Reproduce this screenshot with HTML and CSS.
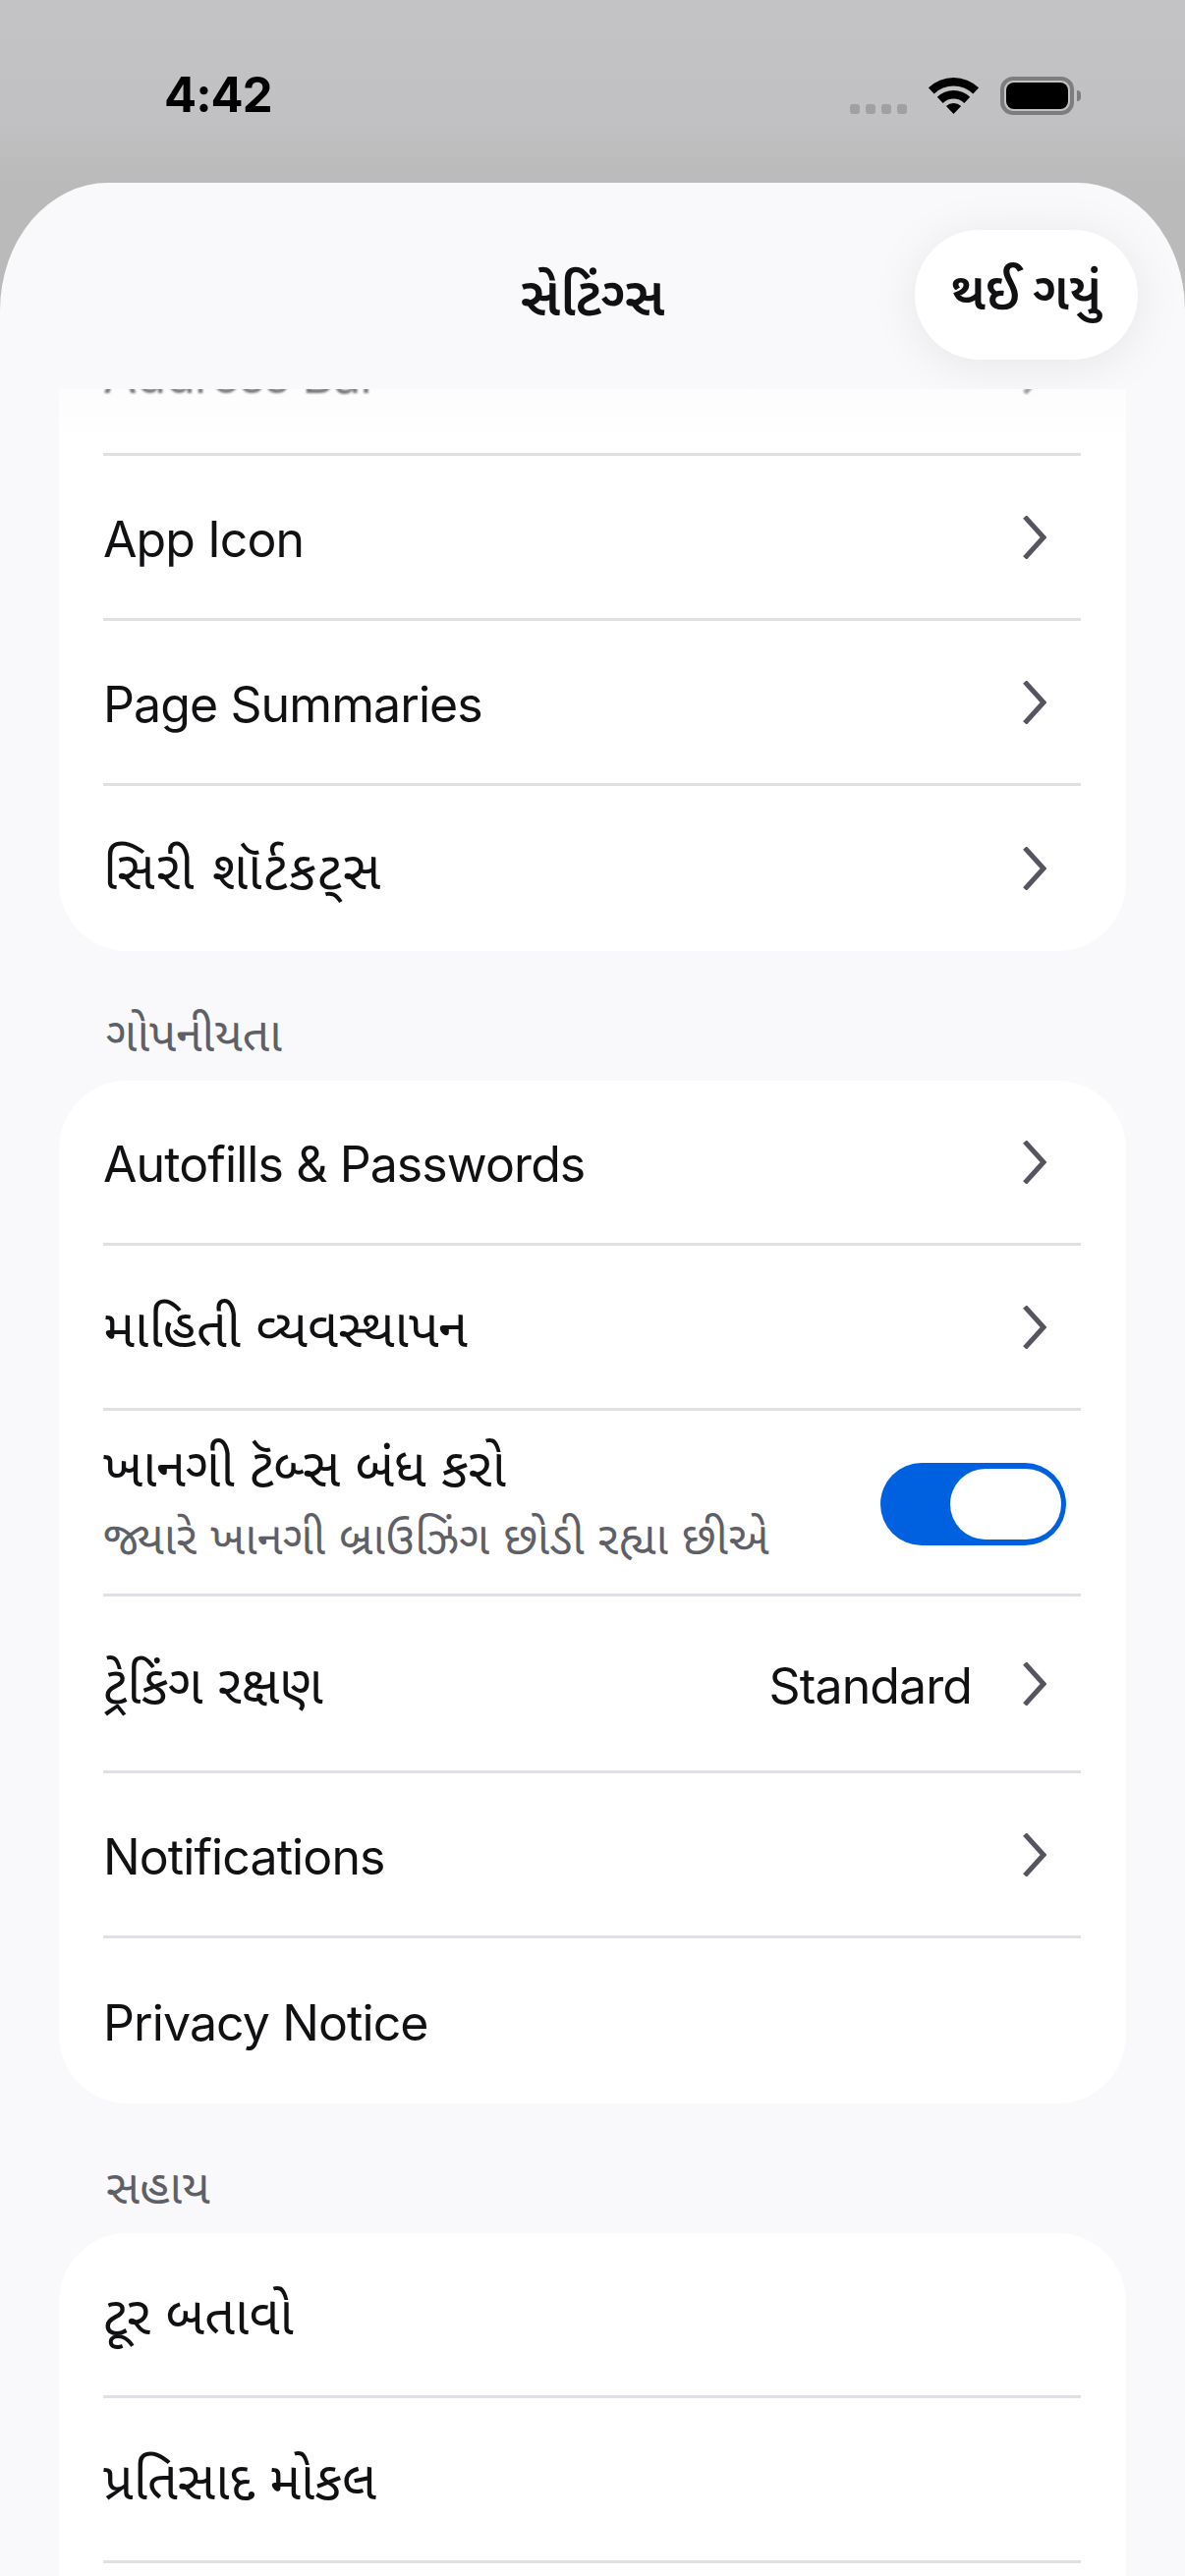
FILE: index.html
```html
<!DOCTYPE html>
<html lang="gu">
<head>
<meta charset="UTF-8">
<meta name="viewport" content="width=device-width, initial-scale=1.0">
<title>સેટિંગ્સ</title>
<link rel="stylesheet" href="styles.css">
</head>
<body>
    <div class="status-bar">
        <span class="time">4:42</span>
        <div class="status-icons">
            <div class="signal"><i></i><i></i><i></i><i></i></div>
            <svg class="wifi" width="51" height="37" viewBox="0 0 51 37">
                <path d="M-.2 10.4A37 37 0 0 1 51.2 10.4L45.3 16.5A28.5 28.5 0 0 0 5.7 16.5Z"/>
                <path d="M8.8 19.7A24 24 0 0 1 42.2 19.7L36.3 25.9A15.5 15.5 0 0 0 14.7 25.9Z"/>
                <path d="M17.9 29.1A11 11 0 0 1 33.1 29.1L25.5 37Z"/>
            </svg>
            <div class="battery"><div class="battery-fill"></div></div>
            <div class="battery-cap"></div>
        </div>
    </div>

    <div class="sheet">
        <header class="sheet-header">
            <h1>સેટિંગ્સ</h1>
            <button class="done">થઈ ગયું</button>
        </header>

        <div class="scroll-area">
            <div class="scroll-fade"></div>
            <div class="scroll-content">
                <section class="card">
                    <div class="row row-address">
                        <span class="label">Address Bar</span>
                        <svg class="chevron" width="24" height="44" viewBox="0 0 24 44"><path d="M2 1L21 22L2 43"/></svg>
                    </div>
                    <div class="row">
                        <span class="label">App Icon</span>
                        <svg class="chevron" width="24" height="44" viewBox="0 0 24 44"><path d="M2 1L21 22L2 43"/></svg>
                    </div>
                    <div class="row">
                        <span class="label">Page Summaries</span>
                        <svg class="chevron" width="24" height="44" viewBox="0 0 24 44"><path d="M2 1L21 22L2 43"/></svg>
                    </div>
                    <div class="row">
                        <span class="label gu gu-wide">સિરી શૉર્ટકટ્સ</span>
                        <svg class="chevron" width="24" height="44" viewBox="0 0 24 44"><path d="M2 1L21 22L2 43"/></svg>
                    </div>
                </section>

                <h2 class="section-label">ગોપનીયતા</h2>
                <section class="card">
                    <div class="row">
                        <span class="label">Autofills &amp; Passwords</span>
                        <svg class="chevron" width="24" height="44" viewBox="0 0 24 44"><path d="M2 1L21 22L2 43"/></svg>
                    </div>
                    <div class="row">
                        <span class="label gu">માહિતી વ્યવસ્થાપન</span>
                        <svg class="chevron" width="24" height="44" viewBox="0 0 24 44"><path d="M2 1L21 22L2 43"/></svg>
                    </div>
                    <div class="row row-toggle">
                        <div class="two-lines">
                            <span class="gu">ખાનગી ટૅબ્સ બંધ કરો</span>
                            <span class="sub">જ્યારે ખાનગી બ્રાઉઝિંગ છોડી રહ્યા છીએ</span>
                        </div>
                        <div class="toggle"><div class="knob"></div></div>
                    </div>
                    <div class="row row-value">
                        <span class="label gu">ટ્રેકિંગ રક્ષણ</span>
                        <span class="label value">Standard</span>
                        <svg class="chevron" width="24" height="44" viewBox="0 0 24 44"><path d="M2 1L21 22L2 43"/></svg>
                    </div>
                    <div class="row">
                        <span class="label">Notifications</span>
                        <svg class="chevron" width="24" height="44" viewBox="0 0 24 44"><path d="M2 1L21 22L2 43"/></svg>
                    </div>
                    <div class="row">
                        <span class="label">Privacy Notice</span>
                    </div>
                </section>

                <h2 class="section-label">સહાય</h2>
                <section class="card">
                    <div class="row"><span class="label gu">ટૂર બતાવો</span></div>
                    <div class="row"><span class="label gu">પ્રતિસાદ મોકલ</span></div>
                    <div class="row"><span class="label">&nbsp;</span></div>
                </section>
            </div>
        </div>
    </div>
</body>
</html>
```

FILE: styles.css
```css
html, body {
    margin: 0;
    height: 2622px;
    overflow: hidden;
}
body {
    background: linear-gradient(#c3c3c5, #c1c1c3 120px, #bababb 186px);
    font-family: Inter, "Noto Sans Gujarati", "Noto Sans", sans-serif;
    color: #111114;
}

.status-bar {
    height: 186px;
    box-sizing: border-box;
    padding: 70px 106px 0 167px;
    display: flex;
    justify-content: space-between;
    align-items: flex-start;
}
.time {
    font-size: 49px;
    line-height: 54px;
    font-weight: 700;
    letter-spacing: -1px;
    color: #000;
}
.status-icons {
    display: flex;
    align-items: flex-end;
    margin-top: 8px;
}
.signal {
    display: flex;
    gap: 6px;
    margin-right: 22px;
    padding-bottom: 1px;
}
.signal i {
    width: 10px;
    height: 10px;
    border-radius: 3px;
    background: #a0a0a2;
}
.wifi {
    fill: #000;
    margin-right: 22px;
    margin-bottom: 1px;
}
.battery {
    width: 75px;
    height: 39px;
    box-sizing: border-box;
    border: 4px solid #7d7d7f;
    border-radius: 13px;
    padding: 2px;
}
.battery-fill {
    height: 100%;
    background: #000;
    border-radius: 8px;
}
.battery-cap {
    width: 4px;
    height: 11px;
    margin: 0 0 14px 3px;
    background: #7d7d7f;
    border-radius: 0 4px 4px 0;
}

.sheet {
    height: 2436px;
    background: #f9f9fb;
    border-radius: 110px 110px 0 0 / 130px 130px 0 0;
    overflow: hidden;
}
.sheet-header {
    height: 210px;
    display: flex;
    align-items: center;
    justify-content: center;
    position: relative;
}
.sheet-header h1 {
    margin: 0 0 -20px;
    font-size: 55px;
    line-height: 70px;
    font-weight: 600;
}
.done {
    position: absolute;
    top: 48px;
    right: 48px;
    width: 227px;
    height: 132px;
    padding: 0;
    border: none;
    border-radius: 66px;
    background: #fff;
    box-shadow: 0 6px 50px rgba(0, 0, 0, 0.08);
    font-family: inherit;
    font-size: 53px;
    font-weight: 600;
    color: #111114;
}

.scroll-area {
    height: 2226px;
    overflow: hidden;
    position: relative;
}
.scroll-fade {
    position: absolute;
    top: 0;
    left: 0;
    right: 0;
    height: 55px;
    background: linear-gradient(rgba(249, 249, 251, 0.45), rgba(249, 249, 251, 0));
    z-index: 1;
}
.scroll-content {
    margin-top: -100px;
    padding: 0 60px;
}
.card {
    background: #fff;
    border-radius: 70px;
    padding: 0 46px 0 45px;
}
.row {
    height: 168px;
    box-sizing: border-box;
    display: flex;
    align-items: center;
    justify-content: space-between;
    padding-right: 35px;
    border-bottom: 3px solid #e0e0e5;
    font-size: 50px;
    letter-spacing: -0.9px;
}
.card .row:last-child {
    border-bottom: none;
}
.label {
    padding-top: 4px;
}
.row-address .label {
    padding-top: 6px;
    filter: blur(1px);
}
.row-address .chevron {
    filter: blur(1px);
}
.gu {
    font-size: 54px;
    letter-spacing: 0;
}
.label.gu {
    padding-top: 11px;
}
.gu-wide {
    letter-spacing: 1.5px;
}
.row-toggle {
    height: 189px;
    padding-right: 15px;
}
.row-value {
    height: 180px;
}
.two-lines {
    display: flex;
    flex-direction: column;
    line-height: 71px;
}
.sub {
    font-size: 47px;
    letter-spacing: 0.3px;
    color: #5f5f68;
}
.value {
    margin-left: auto;
    margin-right: 52px;
}
.chevron {
    fill: none;
    stroke: #555560;
    stroke-width: 5;
    stroke-linejoin: miter;
}
.toggle {
    width: 189px;
    height: 84px;
    margin-top: 3px;
    box-sizing: border-box;
    padding: 6px 5px;
    display: flex;
    justify-content: flex-end;
    background: #0061e0;
    border-radius: 42px;
}
.knob {
    width: 113px;
    height: 72px;
    background: #fff;
    border-radius: 36px;
}
.section-label {
    height: 132px;
    margin: 0 0 0 -60px;
    padding: 0 0 10px 108px;
    box-sizing: border-box;
    display: flex;
    align-items: flex-end;
    font-size: 48px;
    font-weight: 400;
    color: #5f5f68;
}
```
